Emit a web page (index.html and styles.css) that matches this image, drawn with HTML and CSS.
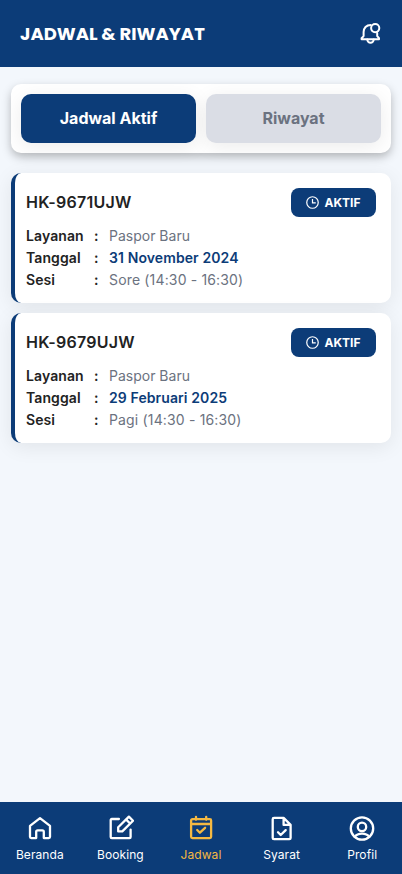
FILE: index.html
```html
<!DOCTYPE html>
<html lang="id">
<head>
<meta charset="utf-8">
<meta name="viewport" content="width=device-width, initial-scale=1">
<title>Jadwal &amp; Riwayat</title>
<link rel="stylesheet" href="styles.css">
</head>
<body>
<div class="app">
  <header class="header">
    <h1 class="title">JADWAL &amp; RIWAYAT</h1>
    <svg class="bell" viewBox="0 0.6 24 24" fill="none" stroke="currentColor" stroke-width="2" stroke-linecap="round" stroke-linejoin="round">
      <path d="M12.700 3.500C8.300 3.500 5.600 6.700 5.600 10.700v4L3.600 16.800v1h17.400v-1L19.200 14.700v-3"/>
      <path d="M9.300 18.200a3.200 3.200 0 0 0 6.400 0"/>
      <circle cx="17.200" cy="6.700" r="4.100"/>
    </svg>
  </header>
  <main class="content">
    <div class="tabs">
      <button class="tab tab-active">Jadwal Aktif</button>
      <button class="tab">Riwayat</button>
    </div>
    <section class="list">
      <article class="card">
        <div class="card-head">
          <h2 class="code">HK-9671UJW</h2>
          <span class="badge"><svg class="clock" viewBox="0 0 14 14" fill="none" stroke="currentColor"><circle cx="7" cy="7" r="6.200"/><path d="M7 3.300V7.300h3.500"/></svg>AKTIF</span>
        </div>
        <dl class="details">
          <dt>Layanan</dt><dd class="colon">:</dd><dd>Paspor Baru</dd>
          <dt>Tanggal</dt><dd class="colon">:</dd><dd class="date">31 November 2024</dd>
          <dt>Sesi</dt><dd class="colon">:</dd><dd class="session">Sore (14:30 - 16:30)</dd>
        </dl>
      </article>
      <article class="card">
        <div class="card-head">
          <h2 class="code">HK-9679UJW</h2>
          <span class="badge"><svg class="clock" viewBox="0 0 14 14" fill="none" stroke="currentColor"><circle cx="7" cy="7" r="6.200"/><path d="M7 3.300V7.300h3.500"/></svg>AKTIF</span>
        </div>
        <dl class="details">
          <dt>Layanan</dt><dd class="colon">:</dd><dd>Paspor Baru</dd>
          <dt>Tanggal</dt><dd class="colon">:</dd><dd class="date">29 Februari 2025</dd>
          <dt>Sesi</dt><dd class="colon">:</dd><dd class="session">Pagi (14:30 - 16:30)</dd>
        </dl>
      </article>
    </section>
  </main>
  <nav class="nav">
    <a class="item"><svg class="icon" viewBox="0 0 28 28"><path d="M4 11.800 14 4.200l10 7.600v11a1.300 1.300 0 0 1-1.300 1.300h-4.900v-6.300a1.500 1.500 0 0 0-1.500-1.500h-4.600a1.500 1.500 0 0 0-1.500 1.500v6.300H5.300A1.300 1.300 0 0 1 4 22.800z"/></svg>Beranda</a>
    <a class="item"><svg class="icon" viewBox="-1.400 0 28 28"><path d="M11.500 5H4.400a1.100 1.100 0 0 0-1.100 1.100v17a1.100 1.100 0 0 0 1.100 1.100h17.700a1.100 1.100 0 0 0 1.100-1.100v-7.500"/><path d="m10.800 13.300 10.700-10.700 4.100 4.100L14.900 17.400h-4.100zM18.600 5.400l4.100 4.100"/></svg>Booking</a>
    <a class="item selected"><svg class="icon" viewBox="0 0 28 28"><path d="M5.400 5.100h17.400a1.300 1.300 0 0 1 1.300 1.300v16.400a1.300 1.300 0 0 1-1.300 1.300H5.400a1.300 1.300 0 0 1-1.300-1.300V6.400a1.300 1.300 0 0 1 1.300-1.300zM4.100 10h20M9 2.800v3M19.200 2.800v3M10.200 16l2.700 2.700 5.200-4.900"/></svg>Jadwal</a>
    <a class="item"><svg class="icon" viewBox="0 0 28 28"><path d="M6 3.900h9.600l7 7v13a1.300 1.300 0 0 1-1.300 1.300H6A1.300 1.300 0 0 1 4.700 23.900V5.200a1.300 1.300 0 0 1 1.300-1.300zM15.600 3.900v7h7M10 18.300l2.700 2.700 5-4.900"/></svg>Syarat</a>
    <a class="item"><svg class="icon" viewBox="0 0 28 28"><circle cx="14" cy="14.500" r="11.200"/><circle cx="14" cy="12.900" r="4.200"/><path d="M6.700 22.800c1.500-2.100 4.300-3.200 7.300-3.200s5.800 1.100 7.300 3.200"/></svg>Profil</a>
  </nav>
</div>
</body>
</html>
```
FILE: styles.css
```css
* { box-sizing: border-box; }
body {
  margin: 0;
  font-family: Inter, "Liberation Sans", sans-serif;
  background: #f3f7fc;
  color: #222;
}
.app { height: 874px; display: flex; flex-direction: column; }
.header {
  height: 67px;
  padding: 0 20px;
  background: #0c3c78;
  color: #fff;
  display: flex;
  align-items: center;
  justify-content: space-between;
}
.title {
  margin: 0;
  font-family: Poppins, Inter, sans-serif;
  font-size: 18px;
  font-weight: 700;
  white-space: nowrap;
}
.bell { width: 24px; height: 24px; }
.content { flex: 1; padding: 17px 11px 0; }
.tabs {
  display: grid;
  grid-template-columns: 1fr 1fr;
  gap: 10px;
  height: 69px;
  padding: 10px;
  border-radius: 10px;
  background: #fff;
  box-shadow: 0 4px 10px rgba(0, 0, 0, 0.25);
}
.tab {
  border: 0;
  padding: 0 0 1px;
  border-radius: 10px;
  font: 700 16px Inter, sans-serif;
  background: #dadde5;
  color: #6b7280;
  box-shadow: 0 4px 20px rgba(0, 0, 0, 0.08);
}
.tab-active { background: #0c3c78; color: #fff; }
.list { display: flex; flex-direction: column; gap: 10px; margin-top: 20px; }
.card {
  height: 130px;
  padding: 15px 15px 0 11px;
  border-left: 4px solid #0c3c78;
  border-radius: 10px;
  background: #fff;
  box-shadow: 0 4px 20px rgba(0, 0, 0, 0.08);
}
.card-head { display: flex; align-items: center; justify-content: space-between; height: 29px; }
.code { margin: 0; padding-bottom: 2px; font-size: 16px; font-weight: 600; letter-spacing: 0.25px; }
.badge {
  display: flex;
  align-items: center;
  justify-content: center;
  gap: 5px;
  width: 85px;
  height: 29px;
  border-radius: 8px;
  background: #0c3c78;
  color: #fff;
  font-size: 12px;
  font-weight: 700;
}
.clock { width: 13px; height: 13px; stroke-width: 1.3; }
.details {
  display: grid;
  grid-template-columns: 68px 15px 1fr;
  grid-auto-rows: 22px;
  margin: 8px 0 0;
  font-size: 14px;
  line-height: 22px;
}
.details dt, .details .colon { font-weight: 600; color: #222; letter-spacing: 0.1px; }
.details dd { margin: 0; color: #6b7280; white-space: nowrap; }
.details .date { color: #0c3c78; font-weight: 600; letter-spacing: 0.1px; }
.details .session { letter-spacing: 0.16px; }
.nav {
  display: grid;
  grid-template-columns: repeat(5, 80.6px);
  justify-content: center;
  height: 72px;
  background: #0c3c78;
}
.item {
  display: flex;
  flex-direction: column;
  align-items: center;
  padding-top: 12px;
  color: #fff;
  font-size: 12px;
  line-height: 18px;
  letter-spacing: 0.07px;
}
.selected { color: #f5b942; }
.icon {
  width: 28px;
  height: 28px;
  margin-bottom: 4px;
  fill: none;
  stroke: currentColor;
  stroke-width: 2.3;
  stroke-linecap: round;
  stroke-linejoin: round;
}
```
